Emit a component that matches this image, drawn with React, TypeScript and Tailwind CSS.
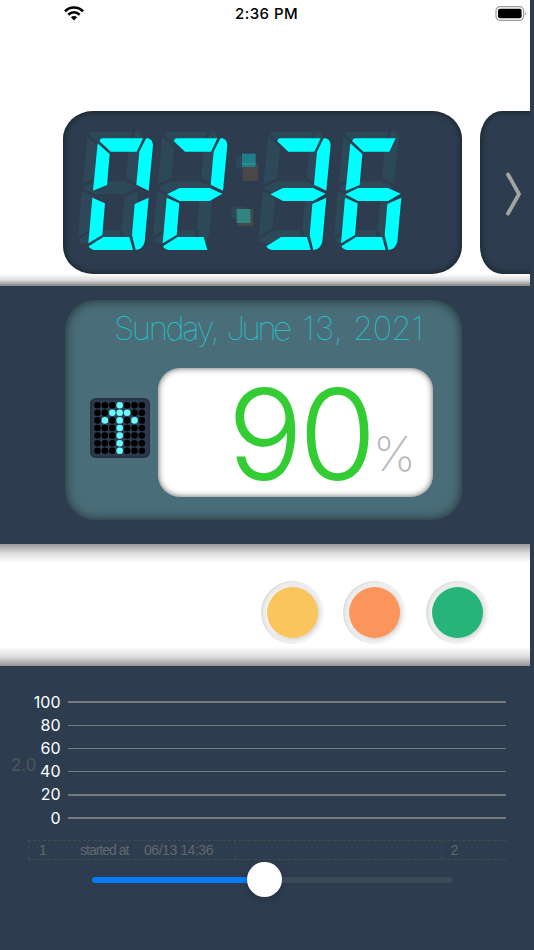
import clsx from 'clsx'

type Segment = 'a' | 'b' | 'c' | 'd' | 'e' | 'f' | 'g'

const segmentPaths: Record<Segment, string> = {
  a: 'M150 124 L183 155 H261 L280 115 H156 Q150 118 150 124 Z',
  b: 'M291 114 Q309 116 310 135 L297 272 L260 254 L269 155 L288 117 Z',
  c: 'M297 293 L285 425 Q280 447 258 450 L247 405 L255 312 Z',
  d: 'M161 411 H239 L250 450 H134 Q122 449 117 439 Z',
  e: 'M128 293 L166 310 L158 405 L116 430 Z',
  f: 'M144 130 L180 162 L172 255 L130 272 Z',
  g: 'M129 283 L167 264 H257 L295 281 L257 303 H167 Z',
}

const allSegments: Segment[] = ['a', 'b', 'c', 'd', 'e', 'f', 'g']

const digitSegments: Record<string, Segment[]> = {
  '0': ['a', 'b', 'c', 'd', 'e', 'f'],
  '2': ['a', 'b', 'g', 'e', 'd'],
  '3': ['a', 'b', 'g', 'c', 'd'],
  '6': ['a', 'f', 'g', 'e', 'c', 'd'],
}

const digits = [
  { value: '0', x: 0, ghostX: -31 },
  { value: '2', x: 223, ghostX: 194 },
  { value: '3', x: 533, ghostX: 511 },
  { value: '6', x: 758, ghostX: 737 },
]

const arrowRows = ['...#...', '..###..', '.#.#.#.', '...#...', '...#...', '...#...', '...#...']

const levels = [100, 80, 60, 40, 20, 0]

function StatusBar() {
  return (
    <div className="flex h-[28px] items-center pl-[64px] pr-[3px]">
      <svg className="-mt-[2px] h-[15px] w-[20px]" viewBox="0 0 20 15" fill="none" stroke="#000" strokeWidth="2.6">
        <path d="M1 5.3 C6 0.3 14 0.3 19 5.3" />
        <path d="M4.3 8.7 C7.7 5.6 12.3 5.6 15.7 8.7" />
        <path d="M6.9 11.2 C8.7 9.6 11.3 9.6 13.1 11.2 L10 14.4 Z" fill="#000" stroke="none" />
      </svg>
      <span className="ml-[151px] whitespace-nowrap font-['Inter'] text-[15px] font-medium leading-[28px] tracking-[0.45px] text-black">
        2:36 PM
      </span>
      <svg className="-mt-[1px] ml-auto h-[15px] w-[32px]" viewBox="0 0 32 15">
        <rect x="1" y="0.7" width="27.6" height="13.6" rx="4" fill="none" stroke="#9a9a9a" strokeWidth="1.2" />
        <rect x="3" y="2.8" width="23.6" height="9.4" rx="2" fill="#000" />
        <path d="M30 5.2 Q31.8 7.5 30 9.8 Z" fill="#9a9a9a" />
      </svg>
    </div>
  )
}

function ClockFace() {
  return (
    <svg className="h-[163px] w-[399px]" viewBox="40 33 1197 489">
      <g fill="#2c4859">
        {digits.map((digit) => (
          <g key={digit.x} transform={`translate(${digit.ghostX} -20)`}>
            {allSegments.map((s) => (
              <path key={s} d={segmentPaths[s]} />
            ))}
          </g>
        ))}
        <rect x="559" y="170" width="42" height="36" />
        <rect x="545" y="320" width="42" height="37" />
      </g>
      <g fill="#4a4847">
        <rect x="579" y="192" width="46" height="51" />
        <rect x="564" y="327" width="46" height="51" />
      </g>
      <rect x="577" y="161" width="41" height="40" fill="#1f7e8c" />
      <rect x="579" y="189" width="39" height="5" fill="#2f928f" />
      <rect x="561" y="327" width="41" height="42" fill="#318480" />
      <g fill="#00ffff">
        {digits.map((digit) => (
          <g key={digit.x} transform={`translate(${digit.x} 0)`}>
            {digitSegments[digit.value].map((s) => (
              <path key={s} d={segmentPaths[s]} />
            ))}
          </g>
        ))}
      </g>
    </svg>
  )
}

function ArrowMatrix() {
  return (
    <svg
      className="h-[60px] w-[60px] rounded-[6px] bg-[#2d3d50] shadow-[inset_0_0_4px_rgba(0,0,0,0.45)]"
      viewBox="0 0 60 60"
    >
      {arrowRows.map((row, y) =>
        row.split('').map((cell, x) => (
          <circle
            key={`${x}-${y}`}
            cx={7.5 + x * 7.4}
            cy={7.2 + y * 7.6}
            r="3.3"
            fill={cell === '#' ? '#69fbff' : '#000'}
          />
        ))
      )}
    </svg>
  )
}

function RoundButton({ className }: { className: string }) {
  return (
    <div className="flex size-[63px] items-center justify-center rounded-full bg-[#ececec] shadow-[inset_1.5px_0.5px_2px_rgba(0,0,0,0.08),inset_-2px_-1px_3px_rgba(255,255,255,0.7)]">
      <div className={clsx('size-[51px] rounded-full shadow-[1px_1px_3px_rgba(0,0,0,0.1),-1px_0_1px_#fff]', className)} />
    </div>
  )
}

function HistoryChart() {
  return (
    <div className="pt-[24.6px]">
      {levels.map((level) => (
        <div key={level} className="flex h-[23.2px] items-center">
          <span className="w-[60.5px] text-right font-['Inter'] text-[16px] leading-[23px] text-white">{level}</span>
          <div className="ml-[7.5px] h-[1.4px] w-[438px] bg-[#777a7d]" />
        </div>
      ))}
    </div>
  )
}

export default function App() {
  return (
    <div className="relative h-[950px] w-[534px] overflow-hidden bg-[#2d3d4f] font-['Liberation_Sans',sans-serif]">
      <section className="flex h-[286px] w-[530px] flex-col overflow-hidden bg-[#fefefe]">
        <StatusBar />
        <div className="mt-[83px] flex shrink-0 gap-[18px] pl-[63px]">
          <div className="h-[163px] w-[399px] shrink-0 rounded-[30px/28px] bg-[#2d3d4f] shadow-[inset_0_0_7px_rgba(0,0,0,0.6)]">
            <ClockFace />
          </div>
          <div className="flex h-[163px] w-[100px] shrink-0 items-center rounded-[22px/28px] bg-[#2d3d4f] pl-[24px] shadow-[inset_0_0_7px_rgba(0,0,0,0.6)]">
            <svg className="h-[46px] w-[18px]" viewBox="0 0 18 46" fill="none" stroke="#a3a3a3" strokeWidth="3.8">
              <path d="M4 4.5 L15 24 L4 43.5" strokeLinecap="round" strokeLinejoin="round" />
            </svg>
          </div>
        </div>
        <div className="h-[12px] bg-gradient-to-b from-white via-[#dcdcdc] to-[#858585]" />
      </section>

      <section className="h-[258px] pl-[64.5px] pt-[14px]">
        <div className="h-[220px] w-[397px] rounded-[30px] bg-[#4a6e79] shadow-[inset_0_0_12px_rgba(0,0,0,0.6)]">
          <p className="flex h-[68px] items-start whitespace-nowrap pl-[49.5px] pt-[7px] font-['Inter'] text-[33px] font-thin leading-[42px] text-[#19cfd4]">
            <span className="w-[112.5px] tracking-[-2.4px]">Sunday, </span>
            <span className="w-[76px] tracking-[-3.4px]">June </span>
            <span className="w-[50.5px] tracking-[0.4px]">13, </span>
            <span className="tracking-[-0.7px]">2021</span>
          </p>
          <div className="flex items-start pl-[25.5px]">
            <div className="mt-[30px]">
              <ArrowMatrix />
            </div>
            <div className="ml-[8px] flex h-[128.5px] w-[275px] items-baseline rounded-[22px] bg-white pl-[69.5px] shadow-[inset_0_0_6px_rgba(0,0,0,0.65)]">
              <span className="w-[145.5px] font-['Inter'] text-[126px] font-light leading-[132px] tracking-[-4.5px] text-[#33cc33]">
                90
              </span>
              <span className="relative -top-[9px] font-['Inter'] text-[48px] font-extralight leading-[50px] text-[#b8b8b8]">%</span>
            </div>
          </div>
        </div>
      </section>

      <section className="flex h-[122px] w-[530px] flex-col bg-white">
        <div className="h-[19px] shrink-0 bg-gradient-to-b from-[#999999] via-[#dedede] to-white" />
        <div className="flex h-[84px] shrink-0 items-start pl-[260.5px] pt-[18px]">
          <RoundButton className="bg-[#fac55c]" />
          <div className="w-[19px]" />
          <RoundButton className="bg-[#fb955b]" />
          <div className="w-[20.5px]" />
          <RoundButton className="bg-[#26b479]" />
        </div>
        <div className="h-[19px] shrink-0 bg-gradient-to-t from-[#959595] via-[#dedede] to-white" />
      </section>

      <section>
        <HistoryChart />
        <span className="absolute left-[11px] top-[755px] text-[18px] leading-[20px] text-[#50555a]">2.0</span>
        <div className="ml-[28px] mt-[10.4px] flex h-[20px] w-[478px] border-y border-l border-dashed border-[#48494c] text-[14px] leading-[19px] text-[#63676b]">
          <span className="w-[51px] pl-[10px]">1</span>
          <span className="w-[64px] tracking-[-1px]">started at</span>
          <span className="tracking-[-0.45px]">06/13 14:36</span>
          <span className="ml-auto w-[206px] border-l border-dashed border-[#434950]" />
          <span className="w-[65.5px] border-l border-dashed border-[#434950] pl-[9px]">2</span>
        </div>
        <div className="ml-[92px] mt-[1px] flex h-[36px] w-[361px] items-center">
          <div className="mt-[2px] h-[5.5px] w-[155px] rounded-l-full bg-[#077bfa]" />
          <div className="size-[35px] shrink-0 rounded-full bg-white shadow-[0_3px_8px_rgba(0,0,0,0.18)]" />
          <div className="mt-[2px] h-[5.5px] flex-1 rounded-r-full bg-[#3b4958]" />
        </div>
      </section>
    </div>
  )
}
